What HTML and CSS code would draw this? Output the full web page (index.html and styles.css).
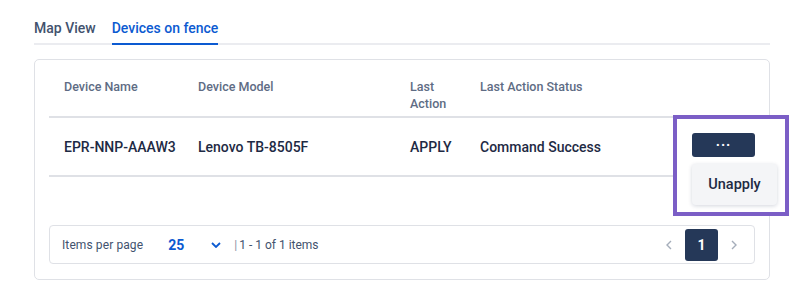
FILE: index.html
```html
<!DOCTYPE html>
<html lang="en">
<head>
    <meta charset="UTF-8">
    <title>Devices on fence</title>
    <link rel="stylesheet" href="styles.css">
</head>
<body>
    <div class="page">
        <div class="tabs">
            <div class="tab">Map View</div>
            <div class="tab active">Devices on fence</div>
        </div>

        <div class="card">
            <div class="table">
                <div class="row head">
                    <div class="cell">Device Name</div>
                    <div class="cell">Device Model</div>
                    <div class="cell">Last<br>Action</div>
                    <div class="cell">Last Action Status</div>
                    <div class="cell"></div>
                </div>
                <div class="row body">
                    <div class="cell">EPR-NNP-AAAW3</div>
                    <div class="cell">Lenovo TB-8505F</div>
                    <div class="cell">APPLY</div>
                    <div class="cell">Command Success</div>
                    <div class="cell"></div>
                </div>
            </div>

            <div class="pager">
                <span class="pager-label">Items per page</span>
                <span class="pager-size">25</span>
                <svg class="chevron" width="10" height="6" viewBox="0 0 10 6">
                    <path d="M1 1l4 4 4-4" fill="none" stroke="#0c5ad1" stroke-width="1.8"/>
                </svg>
                <span class="pager-info"><span class="sep">|</span>1 - 1 of 1 items</span>
                <div class="pager-nav">
                    <svg width="6" height="10" viewBox="0 0 6 10">
                        <path d="M5 1L1 5l4 4" fill="none" stroke="#a5adba" stroke-width="1.4"/>
                    </svg>
                    <span class="page-num">1</span>
                    <svg width="6" height="10" viewBox="0 0 6 10">
                        <path d="M1 1l4 4-4 4" fill="none" stroke="#a5adba" stroke-width="1.4"/>
                    </svg>
                </div>
            </div>

            <!-- highlighted action menu -->
            <div class="highlight">
                <button class="more-btn">&middot;&middot;&middot;</button>
                <div class="menu">Unapply</div>
            </div>
        </div>
    </div>
</body>
</html>
```

FILE: styles.css
```css
* {
    margin: 0;
    padding: 0;
    box-sizing: border-box;
}

body {
    font-family: Roboto, 'Noto Sans', sans-serif;
    background: #fff;
    color: #172b4d;
}

.page {
    padding: 18px 23px 0 34px;
}

.tabs {
    display: flex;
    gap: 16px;
    border-bottom: 2px solid #ebecf0;
}

.tab {
    font-size: 14px;
    font-weight: 500;
    color: #42526e;
    padding: 2px 0 7px;
    margin-bottom: -2px;
    border-bottom: 2px solid transparent;
}

.tab.active {
    color: #0c5ad1;
    border-bottom-color: #0c5ad1;
}

.card {
    position: relative;
    margin-top: 14px;
    border: 1px solid #dfe1e6;
    border-radius: 5px;
    padding: 0 14px 15px;
    height: 221px;
}

.row {
    display: grid;
    grid-template-columns: 134px 212px 70px 1fr 78px;
    border-bottom: 2px solid #dfe1e6;
}

.row.head {
    height: 58px;
    padding-top: 18px;
    font-size: 12.5px;
    font-weight: 500;
    line-height: 17px;
    color: #5e6c84;
}

.row.body {
    height: 59px;
    align-items: center;
    font-size: 14px;
    font-weight: 500;
    color: #1e2a44;
}

.cell {
    padding-left: 15px;
}

.pager {
    display: flex;
    align-items: center;
    margin-top: 48px;
    height: 39px;
    border: 1px solid #dfe1e6;
    border-radius: 4px;
    padding: 0 17px 0 12px;
    font-size: 12px;
    color: #42526e;
}

.pager-label {
    letter-spacing: 0.1px;
}

.pager-size {
    margin-left: 25px;
    font-size: 14px;
    font-weight: 700;
    color: #0c5ad1;
}

.chevron {
    margin-left: 27px;
}

.pager-info {
    margin-left: 13px;
}

.sep {
    color: #8993a4;
    margin-right: 2px;
}

.pager-nav {
    margin-left: auto;
    display: flex;
    align-items: center;
    gap: 13px;
}

.page-num {
    width: 33px;
    height: 32px;
    border-radius: 3px;
    background: #253858;
    color: #fff;
    font-size: 14px;
    font-weight: 700;
    display: flex;
    align-items: center;
    justify-content: center;
}

.highlight {
    position: absolute;
    left: 638px;
    top: 55px;
    width: 116px;
    height: 101px;
    border: 4px solid #7b5ec6;
    background: #fff;
    padding: 14px 0 0 15px;
}

.more-btn {
    display: block;
    width: 63px;
    height: 24px;
    border: none;
    border-radius: 3px;
    background: #253858;
    color: #fff;
    font-family: inherit;
    font-size: 14px;
    font-weight: 700;
    line-height: 1;
    letter-spacing: 1px;
}

.menu {
    margin-top: 7px;
    width: 85px;
    height: 41px;
    background: #f4f5f7;
    border-radius: 4px;
    box-shadow: 0 1px 4px rgba(9, 30, 66, 0.18);
    font-size: 14.5px;
    font-weight: 500;
    color: #1e2a44;
    display: flex;
    align-items: center;
    justify-content: center;
}
```
